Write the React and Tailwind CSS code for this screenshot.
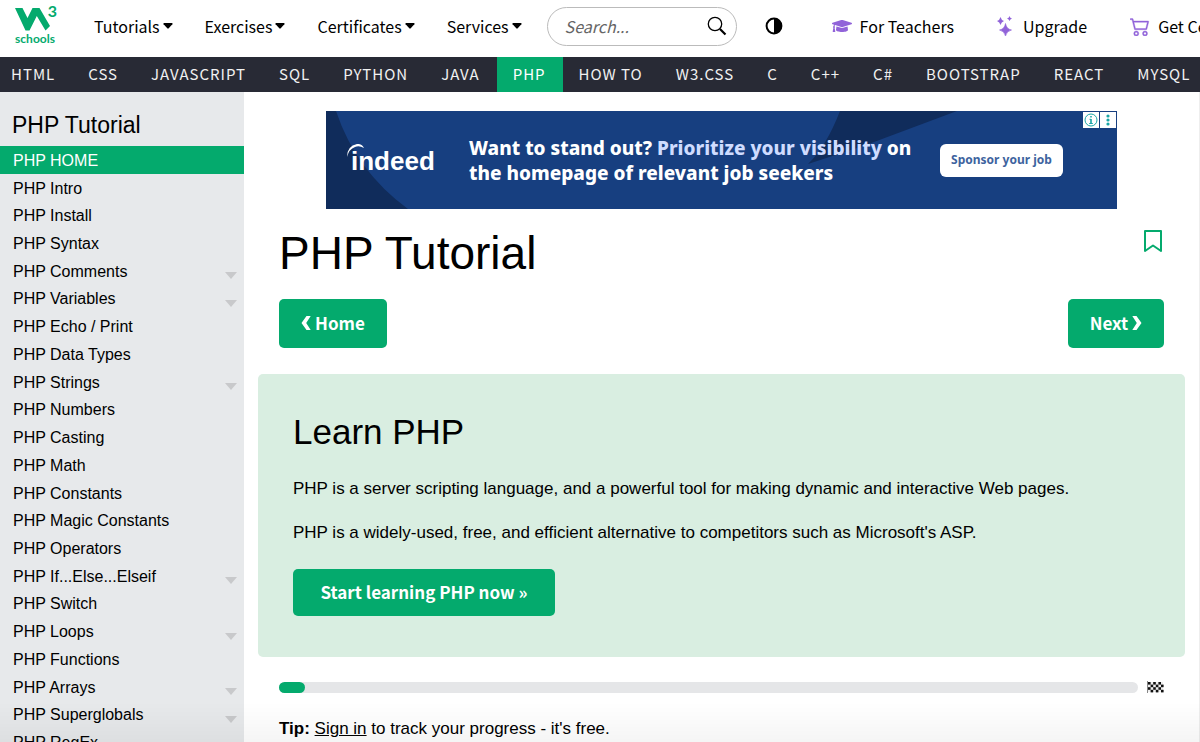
import React from 'react'
import { FaGraduationCap } from 'react-icons/fa'
import { BsCart2 } from 'react-icons/bs'

const menus = ['Tutorials', 'Exercises', 'Certificates', 'Services']

const topics = [
  'HTML', 'CSS', 'JAVASCRIPT', 'SQL', 'PYTHON', 'JAVA', 'PHP', 'HOW TO',
  'W3.CSS', 'C', 'C++', 'C#', 'BOOTSTRAP', 'REACT', 'MYSQL',
]

const chapters = [
  { name: 'PHP HOME', active: true },
  { name: 'PHP Intro' },
  { name: 'PHP Install' },
  { name: 'PHP Syntax' },
  { name: 'PHP Comments', sub: true },
  { name: 'PHP Variables', sub: true },
  { name: 'PHP Echo / Print' },
  { name: 'PHP Data Types' },
  { name: 'PHP Strings', sub: true },
  { name: 'PHP Numbers' },
  { name: 'PHP Casting' },
  { name: 'PHP Math' },
  { name: 'PHP Constants' },
  { name: 'PHP Magic Constants' },
  { name: 'PHP Operators' },
  { name: 'PHP If...Else...Elseif', sub: true },
  { name: 'PHP Switch' },
  { name: 'PHP Loops', sub: true },
  { name: 'PHP Functions' },
  { name: 'PHP Arrays', sub: true },
  { name: 'PHP Superglobals', sub: true },
  { name: 'PHP RegEx' },
]

function Logo() {
  return (
    <a href="#" aria-label="Home" className="relative flex w-[50px] shrink-0 flex-col items-center text-[#04aa6d]">
      <svg viewBox="0 0 42 25" className="h-[25px] w-[42px]" fill="currentColor">
        <path d="M1 2H8.5L13.5 12L18.5 2H25.5L36 20L31.5 24.5L22.8 10L15.5 24.5H11.5Z" />
      </svg>
      <span className="absolute -top-[5px] right-[3px] font-['Lato',sans-serif] text-base leading-5 font-bold">3</span>
      <span className="font-['Lato',sans-serif] text-xs leading-4 font-bold">schools</span>
    </a>
  )
}

function Caret() {
  return (
    <svg viewBox="0 0 10 6" className="h-[6px] w-[10px]" fill="currentColor">
      <path d="M1 0H9Q10 .4 9.4 1.3L5.7 5.3Q5 6 4.3 5.3L.6 1.3Q0 .4 1 0Z" />
    </svg>
  )
}

function Sparkles() {
  return (
    <svg viewBox="0 0 16 20" className="h-5 w-4 text-[#9163d9]" fill="currentColor">
      <path d="M8.5 7.5Q9.5 13 14.5 14Q9.5 15 8.5 20Q7.5 15 2.5 14Q7.5 13 8.5 7.5Z" stroke="currentColor" strokeWidth=".6" />
      <path d="M3.5 1Q4.3 4.2 7 5Q4.3 5.8 3.5 9Q2.7 5.8 0 5Q2.7 4.2 3.5 1Z" />
      <path d="M12.5 0Q13 2 15 2.5Q13 3 12.5 5Q12 3 10 2.5Q12 2 12.5 0Z" />
    </svg>
  )
}

function TopBar() {
  return (
    <header className="flex h-[57px] items-center overflow-hidden pb-[4px] pl-[10px] text-base whitespace-nowrap">
      <Logo />
      <nav className="ml-[34px] flex shrink-0 gap-[32px] pb-[2px]">
        {menus.map((name) => (
          <button key={name} type="button" className="flex items-center gap-[3px]">
            {name}
            <Caret />
          </button>
        ))}
      </nav>
      <form className="ml-[25px] flex h-[39px] w-[190px] shrink-0 items-center rounded-full border border-[#bbb] pr-[9px] pb-[2px] pl-[17px]">
        <input
          type="text"
          aria-label="Search"
          placeholder="Search..."
          className="w-full min-w-0 italic outline-none placeholder:text-[#666]"
        />
        <button type="button" aria-label="Search">
          <svg viewBox="0 0 20 20" className="h-5 w-5" fill="none" stroke="currentColor">
            <circle cx="8" cy="8" r="6.7" strokeWidth="1.3" />
            <path d="M13 13L18.5 18.5" strokeWidth="2.2" />
          </svg>
        </button>
      </form>
      <button type="button" aria-label="Toggle dark mode" className="ml-[28px] shrink-0 pb-[2px]">
        <svg viewBox="0 0 18 18" className="h-[18px] w-[18px]">
          <circle cx="9" cy="9" r="7.4" fill="none" stroke="currentColor" strokeWidth="2" />
          <path d="M9 1.5A7.5 7.5 0 0 1 9 16.5Z" fill="currentColor" />
        </svg>
      </button>
      <div className="ml-[49px] flex shrink-0 gap-[43px] pb-[2px]">
        <a href="#" className="flex items-center gap-[8px]">
          <FaGraduationCap className="h-5 w-5 text-[#9163d9]" />
          For Teachers
        </a>
        <a href="#" className="flex items-center gap-[10px]">
          <Sparkles />
          Upgrade
        </a>
        <a href="#" className="flex items-center gap-[8px]">
          <BsCart2 className="h-5 w-5 text-[#9163d9]" strokeWidth=".3" />
          Get Certified
        </a>
      </div>
    </header>
  )
}

function TopicBar() {
  return (
    <nav className="flex h-[35px] shrink-0 overflow-hidden bg-[#282a35] text-[15px] tracking-[1px] text-[#f1f1f1]">
      {topics.map((name, i) => (
        <a
          key={name}
          href="#"
          className={`flex shrink-0 items-center pr-[17px] pb-[1px] ${i === 0 ? 'pl-[11px]' : 'pl-[16px]'} ${
            name === 'PHP' ? 'bg-[#04aa6d] text-white' : ''
          }`}
        >
          {name}
        </a>
      ))}
    </nav>
  )
}

function Sidebar() {
  return (
    <aside className="w-[244px] shrink-0 overflow-hidden bg-[#e7e9eb]">
      <h2 className="px-[12px] pt-[18px] pb-[6px] text-[23px] leading-[30px]">PHP Tutorial</h2>
      <ul className="grid h-[610px] auto-rows-fr">
        {chapters.map((c) => (
          <li key={c.name}>
            <a
              href="#"
              className={`flex h-full items-center justify-between pt-[2px] pr-[7px] pl-[13px] ${
                c.active ? 'bg-[#04aa6d] text-white' : ''
              }`}
            >
              {c.name}
              {c.sub && (
                <svg viewBox="0 0 12 7" className="mt-[8px] h-[7px] w-[12px]" fill="#c8c9cb">
                  <path d="M0 0H12L6 7Z" />
                </svg>
              )}
            </a>
          </li>
        ))}
      </ul>
    </aside>
  )
}

function Banner() {
  return (
    <section className="relative mx-[47px] flex h-[98px] items-center overflow-hidden bg-[#173f80] font-['Noto_Sans',sans-serif] font-bold text-white">
      <svg viewBox="0 0 791 98" className="absolute inset-0 h-full w-full" fill="#102c5b">
        <path d="M0 0H10Q30 60 82 98H0Z" />
        <path d="M514 0H631L540 34L482 53Q500 36 514 0Z" />
      </svg>
      <div className="relative ml-[25px] w-[118px] shrink-0 pt-[2px] font-['Liberation_Sans',sans-serif] text-[26px] leading-8">
        <svg viewBox="0 0 18 14" className="absolute top-[1px] -left-[4px] h-[14px] w-[18px]" fill="#fff">
          <path d="M0 13Q0 2 10 0Q15 -.5 17 4Q12 1 8 3Q2 5 0 13Z" />
        </svg>
        indeed
      </div>
      <p className="relative shrink-0 pt-[2px] text-[19px] leading-[25px] font-extrabold">
        Want to stand out? <span className="text-[#cfdcff]">Prioritize your visibility</span> on
        <br />
        the homepage of relevant job seekers
      </p>
      <button
        type="button"
        className="relative mr-[54px] ml-auto h-[33px] w-[123px] shrink-0 rounded-md bg-white text-xs text-[#3d639e]"
      >
        Sponsor your job
      </button>
      <div className="absolute top-[1px] right-[1px] flex gap-[1px]">
        <span className="flex h-4 w-4 items-center justify-center bg-white">
          <svg viewBox="0 0 14 14" className="h-[14px] w-[14px]" fill="none" stroke="#1aa6a6">
            <circle cx="7" cy="7" r="6" />
            <path d="M7 3V4.6M7 6V10.5" strokeWidth="1.6" />
            <path d="M5.5 6.3H7M5.2 10.5H8.8" />
          </svg>
        </span>
        <span className="flex h-4 w-4 items-center justify-center bg-white">
          <svg viewBox="0 0 4 12" className="h-[12px] w-[4px]" fill="#1aa6a6">
            <circle cx="2" cy="2" r="1.6" />
            <circle cx="2" cy="6" r="1.6" />
            <circle cx="2" cy="10" r="1.6" />
          </svg>
        </span>
      </div>
    </section>
  )
}

function Chevron({ flip }) {
  return (
    <svg viewBox="0 0 10 14" className={`h-[14px] w-[10px] ${flip ? '-scale-x-100' : ''}`} fill="currentColor">
      <path d="M5.5 0H9.7L5.2 7L9.7 14H5.5L.5 7Z" />
    </svg>
  )
}

function Flag() {
  const squares = []
  for (let y = 0; y < 4; y++) {
    for (let x = 0; x < 6; x++) {
      if ((x + y) % 2 === 0) squares.push([x, y])
    }
  }
  return (
    <svg viewBox="0 0 17 12" className="h-[12px] w-[17px]">
      <path d="M.5 0V12" stroke="#888" />
      <rect x="1" y="1" width="15" height="10" fill="#eee" />
      {squares.map(([x, y]) => (
        <rect key={`${x}-${y}`} x={1 + x * 2.6} y={1 + y * 2.6} width="2.6" height="2.6" fill="#111" />
      ))}
    </svg>
  )
}

const greenButton =
  "flex items-center justify-center rounded-[5px] bg-[#04aa6d] pb-[2px] font-['Noto_Sans_CJK_JP',sans-serif] text-[17px] font-bold text-white"

export default function App() {
  return (
    <div className="flex h-screen flex-col overflow-hidden bg-white font-['Liberation_Sans',Arial,sans-serif] text-base text-black">
      <div className="shrink-0 font-['Noto_Sans_CJK_JP',sans-serif]">
        <TopBar />
        <TopicBar />
      </div>
      <div className="flex min-h-0 flex-1">
        <Sidebar />
        <main className="min-w-0 flex-1 overflow-hidden border-r border-[#eee] pt-[19px] pr-[35px] pl-[35px]">
          <Banner />
          <div className="mt-[14px] flex items-start justify-between">
            <h1 className="text-[46px] leading-[60px]">PHP Tutorial</h1>
            <button type="button" aria-label="Bookmark" className="mt-[6px] text-[#04aa6d]">
              <svg viewBox="0 0 22 24" className="h-6 w-[22px]" fill="none" stroke="currentColor" strokeWidth="2">
                <path d="M3 2H19V22L11 16.5L3 22Z" strokeLinejoin="round" />
              </svg>
            </button>
          </div>
          <div className="mt-[16px] flex justify-between">
            <button type="button" className={`${greenButton} h-[49px] w-[108px] gap-[4px]`}>
              <Chevron /> Home
            </button>
            <button type="button" className={`${greenButton} h-[49px] w-[96px] gap-[4px]`}>
              Next <Chevron flip />
            </button>
          </div>
          <section className="-mx-[21px] mt-[26px] rounded-[5px] bg-[#d9eee1] px-[35px] pt-[36px] pb-[41px]">
            <h2 className="text-[35px] leading-[44px]">Learn PHP</h2>
            <p className="mt-[23px] text-[17px] leading-6">
              PHP is a server scripting language, and a powerful tool for making dynamic and interactive Web pages.
            </p>
            <p className="mt-[20px] text-[17px] leading-6">
              PHP is a widely-used, free, and efficient alternative to competitors such as Microsoft's ASP.
            </p>
            <button type="button" className={`${greenButton} mt-[24px] h-[47px] w-[262px]`}>
              Start learning PHP now »
            </button>
          </section>
          <div className="mt-[24px] flex items-center gap-[9px]">
            <div className="h-[11px] flex-1 rounded-full bg-[#e5e6e8]">
              <div className="h-full w-[26px] rounded-full bg-[#04aa6d]" />
            </div>
            <Flag />
          </div>
          <p className="mt-[24px] text-[17px] leading-6">
            <b>Tip:</b>{' '}
            <a href="#" className="underline">Sign in</a> to track your progress - it's free.
          </p>
        </main>
      </div>
      <div className="pointer-events-none fixed inset-x-0 bottom-0 h-10 bg-linear-to-b from-transparent to-black/4" />
    </div>
  )
}
